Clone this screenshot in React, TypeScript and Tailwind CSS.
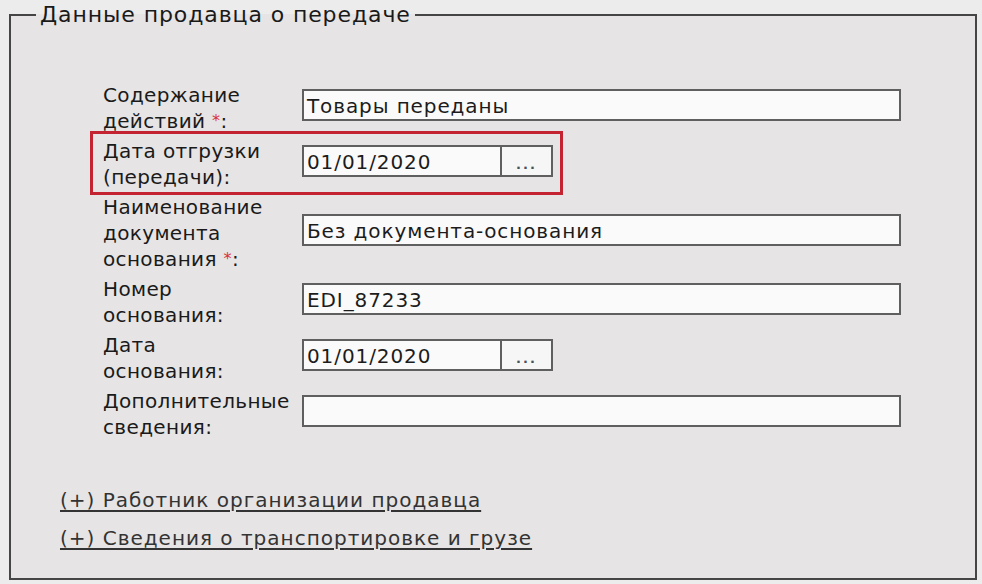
import React from "react";

const font = { fontFamily: '"DejaVu Sans", Verdana, sans-serif' };

function Req() {
  return <span className="text-[#d8323c] text-[16px] align-top">*</span>;
}

function TextBox({ value }: { value?: string }) {
  return (
    <div className="h-[32px] w-[599px] border-2 border-[#5f5f5f] bg-[#fbfafa] pl-[3px] text-[20px] leading-[30px] tracking-[0.9px] text-[#1c1c1c]">
      {value}
    </div>
  );
}

function DateBox({ value }: { value: string }) {
  return (
    <div className="flex h-[32px]">
      <div className="h-[32px] w-[200px] border-2 border-[#5f5f5f] bg-[#fbfafa] pl-[3px] text-[20px] leading-[30px] tracking-[0.9px] text-[#1c1c1c]">
        {value}
      </div>
      <div className="flex h-[32px] w-[51px] items-center justify-center border-2 border-l-0 border-[#5f5f5f] bg-[#f7f6f6] pt-[8px] text-[13px] font-bold tracking-[2px] text-[#44505a]">
        ...
      </div>
    </div>
  );
}

function Row({ label, children, boxed }: { label: React.ReactNode; children: React.ReactNode; boxed?: boolean }) {
  return (
    <div className="relative flex items-center">
      {boxed && (
        <div className="absolute left-[-13px] top-[-7px] h-[64px] w-[473px] border-[3px] border-[#c42432]" />
      )}
      <div className="w-[199px] text-[20px] leading-[26px] tracking-[0.35px] text-[#1a1a1a]">{label}</div>
      <div className="pb-[6px]">{children}</div>
    </div>
  );
}

export default function App() {
  return (
    <div className="h-[584px] w-[982px] bg-[#ececec] pl-[9px]" style={font}>
      <fieldset className="h-[580px] w-[968px] border-2 border-[#454545] bg-[#e6e4e4]">
        <legend className="ml-[25px] px-[4px] text-[22px] leading-[30px] tracking-[0.9px] text-[#1a1a1a]">
          Данные продавца о передаче
        </legend>

        <div className="flex flex-col gap-[4px] pl-[92px] pt-[52px]">
          <Row label={<>Содержание<br />действий <Req />:</>}>
            <TextBox value="Товары переданы" />
          </Row>
          <Row boxed label={<>Дата отгрузки<br />(передачи):</>}>
            <DateBox value="01/01/2020" />
          </Row>
          <Row label={<>Наименование<br />документа<br />основания <Req />:</>}>
            <TextBox value="Без документа-основания" />
          </Row>
          <Row label={<>Номер<br />основания:</>}>
            <TextBox value="EDI_87233" />
          </Row>
          <Row label={<>Дата<br />основания:</>}>
            <DateBox value="01/01/2020" />
          </Row>
          <Row label={<>Дополнительные<br />сведения:</>}>
            <TextBox />
          </Row>
        </div>

        <div className="flex flex-col gap-[12px] pl-[49px] pt-[47px] text-[20px] leading-[26px] tracking-[1px] text-[#333]">
          <a className="w-fit underline underline-offset-[3px]">(+) Работник организации продавца</a>
          <a className="w-fit underline underline-offset-[3px]">(+) Сведения о транспортировке и грузе</a>
        </div>
      </fieldset>
    </div>
  );
}
